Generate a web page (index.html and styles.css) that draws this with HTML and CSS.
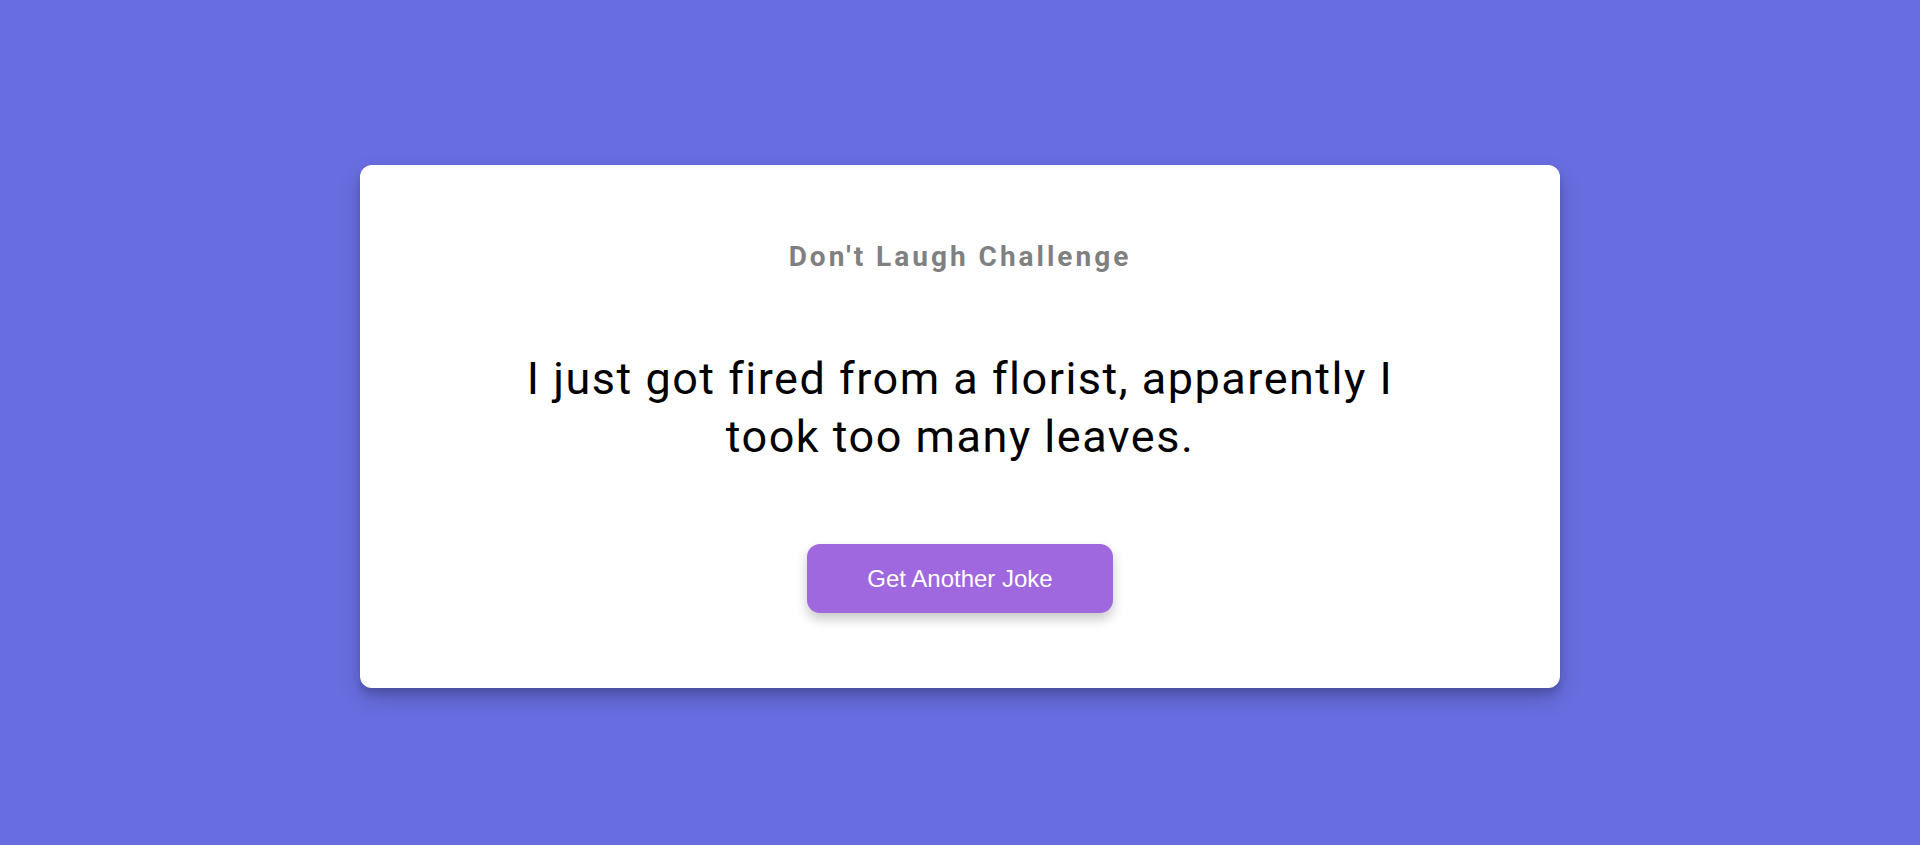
FILE: index.html
```html
<!DOCTYPE html>
<html lang="en">
<head>
<meta charset="utf-8">
<title>Don't Laugh Challenge</title>
<link rel="stylesheet" href="styles.css">
</head>
<body>
<main class="page">
  <section class="card">
    <h3 class="title">Don't Laugh Challenge</h3>
    <p class="joke">I just got fired from a florist, apparently I took too many leaves.</p>
    <button class="btn" type="button">Get Another Joke</button>
  </section>
</main>
</body>
</html>
```

FILE: styles.css
```css
* { box-sizing: border-box; }
html, body { margin: 0; padding: 0; }
body {
  background: #686ee0;
  font-family: Roboto, "Liberation Sans", sans-serif;
}
.page {
  height: 845px;
  padding-top: 8px;
  display: flex;
  align-items: center;
  justify-content: center;
}
.card {
  width: 1200px;
  background: #ffffff;
  border-radius: 12px;
  box-shadow: 0 10px 22px rgba(0, 0, 0, 0.2), 0 6px 6px rgba(0, 0, 0, 0.12);
  padding: 76px 150px 75px;
  display: flex;
  flex-direction: column;
  align-items: center;
  gap: 76px;
  text-align: center;
}
.title {
  margin: 0;
  font-size: 28px;
  font-weight: 700;
  line-height: 32.8px;
  letter-spacing: 3px;
  color: #808080;
}
.joke {
  margin: 0 0 1px;
  font-size: 45px;
  font-weight: 400;
  line-height: 58.5px;
  letter-spacing: 1.5px;
  color: #000;
}
.btn {
  border: none;
  background: #9f68df;
  color: #ffffff;
  font-family: "Liberation Sans", Arial, sans-serif;
  font-size: 24px;
  line-height: 27px;
  padding: 21px 60px;
  border-radius: 13px;
  box-shadow: 0 6px 12px rgba(0, 0, 0, 0.22);
  cursor: pointer;
}
```
